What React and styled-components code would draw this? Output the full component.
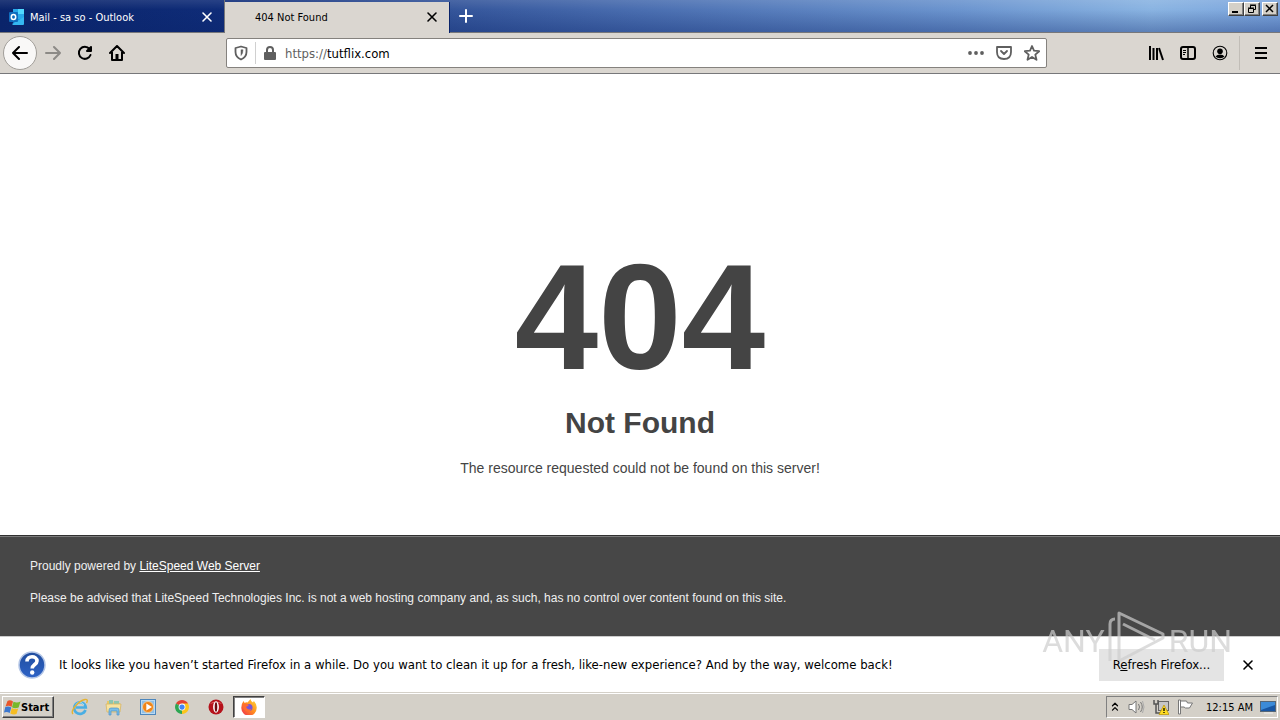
import styled, { createGlobalStyle } from 'styled-components';

const tahoma = `'DejaVu Sans Condensed', 'Noto Sans', sans-serif`;
const arial = `'Liberation Sans', Arial, sans-serif`;

const GlobalStyle = createGlobalStyle`
  * {
    box-sizing: border-box;
  }

  body {
    margin: 0;
    color: #000;
    font-family: ${tahoma};
    font-size: 11px;
  }

  button,
  input {
    font: inherit;
    color: inherit;
  }

  svg {
    display: block;
    flex: none;
  }
`;

const Desktop = styled.div`
  display: flex;
  flex-direction: column;
  min-height: 100vh;
  background: #fff;
`;

const TitleBar = styled.header`
  display: flex;
  align-items: stretch;
  height: 33px;
  border-bottom: 1px solid #77777a;
  background:
    linear-gradient(180deg, rgba(255, 255, 255, 0.1) 0%, rgba(10, 36, 106, 0) 30%, rgba(10, 36, 106, 0.35) 100%),
    linear-gradient(90deg, #0a246a 0%, #0f2c78 17%, #36579c 36%, #4a6eb0 50%, #6c95cf 75%, #8ab4e2 90%, #7ba4dc 100%);
`;

const Tab = styled.div`
  display: flex;
  align-items: center;
  width: 225px;
  height: ${({ $active }) => ($active ? '31px' : '32px')};
  margin-top: ${({ $active }) => ($active ? '2px' : '0')};
  padding: ${({ $active }) => ($active ? '0 9px 1px 30px' : '2px 9px 0 8px')};
  border-right: 1px solid ${({ $active }) => ($active ? '#0a246a' : '#77777a')};
  background: ${({ $active }) => ($active ? '#dad6d0' : 'transparent')};
  color: ${({ $active }) => ($active ? '#000' : '#fff')};
  gap: 5px;
`;

const TabTitle = styled.span`
  flex: 1;
  white-space: nowrap;
`;

const IconButton = styled.button`
  display: flex;
  align-items: center;
  justify-content: center;
  width: ${({ $size }) => $size || 16}px;
  height: ${({ $size }) => $size || 16}px;
  padding: 0;
  border: 0;
  background: none;
`;

const NewTabButton = styled(IconButton)`
  width: 32px;
  height: 32px;
  color: #fff;
`;

const WindowControls = styled.div`
  display: flex;
  margin-left: auto;
  padding: 2px 2px 0 0;
`;

const WindowButton = styled.button`
  display: flex;
  align-items: center;
  justify-content: center;
  width: 16px;
  height: 14px;
  margin-left: ${({ $apart }) => ($apart ? '2px' : '0')};
  padding: 0;
  border: 1px solid;
  border-color: #fff #404040 #404040 #fff;
  background: #d4d0c8;
  box-shadow: inset -1px -1px #808080;
`;

const Toolbar = styled.nav`
  display: flex;
  align-items: center;
  height: 41px;
  padding: 0 3px;
  border-bottom: 1px solid #77777a;
  background: #dad6d0;
`;

const ToolGroup = styled.div`
  display: flex;
  align-items: center;
  width: 223px;
`;

const BackButton = styled(IconButton)`
  width: 34px;
  height: 34px;
  border: 1px solid #a19e99;
  border-radius: 50%;
  background: #f9f8f7;
`;

const RightTools = styled(ToolGroup)`
  justify-content: flex-end;
  width: 230px;
`;

const MenuSlot = styled.div`
  display: flex;
  align-items: center;
  height: 34px;
  margin-left: 3px;
  padding-left: 5px;
  border-left: 1px solid #c1bdb7;
`;

const AddressBar = styled.form`
  display: flex;
  flex: 1;
  align-items: center;
  min-width: 0;
  height: 30px;
  padding: 0 6px;
  border: 1px solid #85827e;
  border-radius: 2px;
  background: #fff;
  color: #5f5f5f;
`;

const Identity = styled.div`
  display: flex;
  align-items: center;
  height: 22px;
  margin-left: 6px;
  padding-left: 6px;
  border-left: 1px solid #d0d0d0;
`;

const UrlField = styled.label`
  display: flex;
  flex: 1;
  align-items: center;
  margin-left: 7px;
  font-size: 13px;
`;

const UrlInput = styled.input`
  flex: 1;
  min-width: 0;
  padding: 0;
  border: 0;
  outline: 0;
  background: none;
  color: #000;
`;

const PageActions = styled.div`
  display: flex;
  gap: 12px;
`;

const Page = styled.main`
  display: flex;
  flex: 1;
  flex-direction: column;
  color: #444;
  font-family: ${arial};
`;

const ErrorMessage = styled.section`
  display: flex;
  flex: 1;
  flex-direction: column;
  align-items: center;
  justify-content: flex-end;
  padding-bottom: 58px;
  text-align: center;
`;

const ErrorCode = styled.h1`
  margin: 0;
  font-size: 150px;
  line-height: 150px;
`;

const ErrorTitle = styled.h2`
  margin: 14px 0 0;
  font-size: 30px;
  line-height: 34px;
`;

const ErrorText = styled.p`
  margin: 19px 0 0;
  font-size: 14px;
  line-height: 18px;
`;

const PageFooter = styled.footer`
  height: 101px;
  padding: 21px 30px 0;
  border-top: 1px solid #303030;
  background: #474747;
  box-shadow: inset 0 1px #7b7b7b;
  color: #f0f0f0;
  font-size: 12px;
  line-height: 18px;

  p {
    margin: 0 0 14px;
  }

  a {
    color: #fff;
  }
`;

const Notification = styled.aside`
  display: flex;
  align-items: center;
  height: 57px;
  padding: 0 24px 0 18px;
  border-top: 1px solid #ccc;
  border-bottom: 1px solid #d4d0c8;
  background: #fff;
  font-size: 13px;
`;

const NotificationText = styled.span`
  flex: 1;
  margin-left: 13px;
  white-space: nowrap;
`;

const RefreshButton = styled.button`
  width: 125px;
  height: 32px;
  margin-right: 16px;
  padding: 0;
  border: 0;
  background: #e4e4e4;
  white-space: nowrap;
`;

// lies over the page, the notification and its button
const Watermark = styled.div`
  position: fixed;
  right: 48px;
  bottom: 46px;
  display: flex;
  align-items: center;
  color: rgba(205, 205, 205, 0.7);
  font-family: Roboto, ${arial};
  font-size: 32px;
  line-height: 66px;
  pointer-events: none;
`;

const Taskbar = styled.footer`
  display: flex;
  align-items: center;
  height: 27px;
  padding: 0 2px;
  border-top: 1px solid #fff;
  background: #d4d0c8;
`;

const StartButton = styled.button`
  display: flex;
  align-items: center;
  width: 52px;
  height: 22px;
  margin-right: 9px;
  padding: 0 1px;
  border: 1px solid;
  border-color: #fff #404040 #404040 #fff;
  background: #d4d0c8;
  box-shadow: inset -1px -1px #808080;
  font-weight: bold;
`;

const TaskButton = styled.button`
  display: flex;
  align-items: center;
  justify-content: center;
  width: ${({ $active }) => ($active ? '32px' : '34px')};
  height: 22px;
  padding: 0;
  border: 1px solid transparent;
  border-color: ${({ $active }) => ($active ? '#404040 #fff #fff #404040' : 'transparent')};
  background: ${({ $active }) => ($active ? '#fff' : 'transparent')};
  box-shadow: ${({ $active }) => ($active ? 'inset 1px 1px #808080' : 'none')};
`;

const Tray = styled.div`
  display: flex;
  align-items: center;
  height: 22px;
  margin-left: auto;
  padding: 0 1px 0 3px;
  border: 1px solid;
  border-color: #808080 #fff #fff #808080;
  gap: 8px;
`;

const Clock = styled.time`
  margin: 0 -1px 0 5px;
  white-space: nowrap;
`;

const Stroke = ({ children, size = 16, width = 2, ...rest }) => (
  <svg
    width={size}
    height={size}
    viewBox="0 0 16 16"
    fill="none"
    stroke="currentColor"
    strokeWidth={width}
    strokeLinecap="round"
    strokeLinejoin="round"
    {...rest}
  >
    {children}
  </svg>
);

const CloseIcon = () => (
  <Stroke width={1.6}>
    <path d="M4 4l8 8M12 4l-8 8" />
  </Stroke>
);

const OutlookIcon = () => (
  <svg width="17" height="16" viewBox="0 0 17 16">
    <rect x="5" width="11" height="14" rx="1" fill="#1490df" />
    <path d="M5 0h5v5H5z" fill="#28a8ea" />
    <path d="M10 0h6v5h-6z" fill="#50d9ff" />
    <path d="M10 5h6v5h-6z" fill="#28a8ea" />
    <path d="M4 15l12-7v7a1 1 0 0 1-1 1H5z" fill="#35b8f1" />
    <rect x="1" y="3" width="9" height="10" rx="1" fill="#0f6cbd" />
    <ellipse cx="5.500" cy="8" rx="2.200" ry="2.500" fill="none" stroke="#fff" strokeWidth="1.500" />
  </svg>
);

const LibraryIcon = () => (
  <Stroke strokeLinecap="butt">
    <path d="M2 1v14M5.500 3v12M9 3v12" />
    <path d="M11 3l4 12" />
  </Stroke>
);

const SidebarIcon = () => (
  <Stroke>
    <rect x="1" y="2" width="14" height="12" rx="2" />
    <path d="M8 2v12" strokeWidth="1.500" />
    <path d="M3 5.500h3M3 7.500h3M3 9.500h2" strokeWidth="1" strokeLinecap="butt" />
  </Stroke>
);

const AccountIcon = () => (
  <svg width="16" height="16" viewBox="0 0 16 16">
    <circle cx="8" cy="8" r="6.800" fill="none" stroke="#000" strokeWidth="1.100" />
    <circle cx="8" cy="6.300" r="2.800" />
    <path d="M3.500 11.500Q5 9.500 8 9.500t4.500 2Q11 13.300 8 13.300t-4.500-1.800z" />
  </svg>
);

const HelpIcon = () => (
  <svg width="28" height="28" viewBox="0 0 28 28">
    <defs>
      <linearGradient id="help" x2="0" y2="1">
        <stop stopColor="#204d9e" />
        <stop offset="1" stopColor="#2e63c7" />
      </linearGradient>
    </defs>
    <circle cx="14" cy="14" r="13" fill="url(#help)" stroke="#b4c6e6" strokeWidth="1.500" />
    <path d="M9 10.500C9 4 19 4.500 19 10c0 3.500-4.800 3.500-4.800 7.500" fill="none" stroke="#fff" strokeWidth="3.600" />
    <circle cx="14.200" cy="21.500" r="2.200" fill="#fff" />
  </svg>
);

const WindowsLogo = () => (
  <svg width="17" height="16" viewBox="0 0 17 16">
    <path d="M3.500 2Q6 .5 9 2.500L7.500 8Q5 6 1.500 7.500z" fill="#e8562a" />
    <path d="M9.500 2.800Q13 4.500 16.500 2.500l-1.900 6Q11 10 8 8.300z" fill="#77b82a" />
    <path d="M1.300 8.100Q4.500 6.800 7.300 8.600L5.700 14Q3 12.500 0 13.500z" fill="#3c78cf" />
    <path d="M7.800 9q3 1.800 6.400.4L12.500 15q-3 1.200-6.200-.6z" fill="#f6bd23" />
  </svg>
);

const ExplorerIcon = () => (
  <svg width="18" height="18" viewBox="0 0 18 18" fill="none">
    <path d="M14.500 12a5.800 5.800 0 1 1 .3-2.500H5" stroke="#4aaee3" strokeWidth="2.600" />
    <path d="M4.500 7.500A4.600 4.600 0 0 1 13 7" stroke="#a5e2f8" />
    <path d="M2 16C-1 13 7 3 14 1.500c3-.6 2.500 2 1.500 3.500" stroke="#e5b332" strokeWidth="1.400" />
  </svg>
);

const FolderIcon = () => (
  <svg width="18" height="18" viewBox="0 0 18 18">
    <path d="M2 3h6l1 2h6v8H2z" fill="#e7c868" />
    <path d="M4 2h4v5H4zM9 3h5v4H9z" fill="#8cc6b0" />
    <path d="M1 6h15l-1 8H2z" fill="#f7e3a0" stroke="#d7b564" strokeWidth=".8" />
    <path d="M4 17v-5q0-2 2-2h6q2 0 2 2v5h-2v-4H6v4z" fill="#79bee8" stroke="#4e93c9" strokeWidth=".7" />
  </svg>
);

const PlayerIcon = () => (
  <svg width="16" height="16" viewBox="0 0 16 16">
    <rect x=".5" y=".5" width="15" height="15" fill="#b9daf4" stroke="#4c86bc" />
    <rect x="2" y="2" width="12" height="12" fill="#8fbfe7" />
    <circle cx="8" cy="8" r="5.500" fill="#ef8418" stroke="#f9d4a0" strokeWidth=".8" />
    <path d="M6.300 4.500v7L12 8z" fill="#fff" />
  </svg>
);

const ChromeIcon = () => (
  <svg width="14" height="14" viewBox="0 0 16 16">
    <path d="M8 8L1.100 4A8 8 0 0 1 14.900 4z" fill="#e34133" />
    <path d="M8 8l6.900-4A8 8 0 0 1 8 16z" fill="#fbc51b" />
    <path d="M8 8v8A8 8 0 0 1 1.100 4z" fill="#2da652" />
    <path d="M8 4h7l-3 6-4 6 2-6z" fill="#fbc51b" />
    <circle cx="8" cy="8" r="3.900" fill="#fff" />
    <circle cx="8" cy="8" r="3" fill="#4285f4" />
  </svg>
);

const OperaIcon = () => (
  <svg width="16" height="16" viewBox="0 0 16 16">
    <circle cx="8" cy="8" r="7.500" fill="#b5121b" />
    <path d="M2 5a7 5 0 0 1 12 0Q8 2 2 5z" fill="#e2666a" />
    <ellipse cx="8" cy="8" rx="2.900" ry="5.800" fill="#fff" />
    <ellipse cx="8" cy="8" rx="1.300" ry="4.700" fill="#6d0a10" />
  </svg>
);

const FirefoxIcon = () => (
  <svg width="16" height="16" viewBox="0 0 16 16">
    <defs>
      <linearGradient id="fox" x1="1" x2="0" y2="1">
        <stop stopColor="#ffde38" />
        <stop offset=".5" stopColor="#ff8a20" />
        <stop offset="1" stopColor="#ef2751" />
      </linearGradient>
    </defs>
    <path d="M2.500 2l1.200 2Q5 3 6.500 3.500 8 1.500 9.500 0q.2 2 2.500 3.500l.8-1.500Q16 5 15.700 9A7.700 7.700 0 0 1 .3 9Q.2 5 2.500 2z" fill="url(#fox)" />
    <circle cx="8" cy="8.500" r="3.500" fill="#7555d9" />
    <path d="M2.500 5Q5 4 8 6 6.500 7.500 5 8q2 4 5.500 1.500Q9 14 5 12 1 10 2.500 5z" fill="#ff6c30" />
  </svg>
);

const SpeakerIcon = () => (
  <svg width="17" height="16" viewBox="0 0 17 16" fill="none" stroke="#777">
    <path d="M1 5.500h3L8 2v12l-4-3.500H1z" fill="#fff" />
    <path d="M10.500 5q2 3 0 6M12.500 3q3.500 5 0 10" />
    <path d="M14.500 2q3 6 0 12" stroke="#aaa" />
  </svg>
);

const NetworkIcon = () => (
  <svg width="16" height="16" viewBox="0 0 16 16">
    <rect x="5.500" y="2.500" width="10" height="9" fill="#c6c6c6" stroke="#666" />
    <path d="M1 1v4h4V1M3 5v9h5" fill="none" stroke="#555" strokeWidth="1.500" />
    <path d="M11 6l5 9.500H6z" fill="#ffdc22" stroke="#b89100" strokeWidth=".7" />
    <path d="M11 9v3M11 13v1" stroke="#000" strokeWidth="1.300" />
  </svg>
);

const FlagIcon = () => (
  <svg width="16" height="16" viewBox="0 0 16 16" fill="#fff" stroke="#777">
    <path d="M1.500 1v14h2V1zM3.500 2h6l1 2h5l-3 5h-4L7 8H3.500z" />
  </svg>
);

const MonitorIcon = () => (
  <svg width="16" height="16" viewBox="0 0 16 16">
    <rect x=".5" y="2.500" width="15" height="10" fill="#1856a3" stroke="#567" />
    <path d="M1 3h14v3L1 11z" fill="#3c8bd8" />
    <path d="M4 14h9" stroke="#eee" />
  </svg>
);

const PlayMark = () => (
  <svg width="64" height="66" viewBox="0 0 64 66" fill="none" stroke="currentColor" strokeWidth="3" strokeLinejoin="round">
    <path d="M5 53V16q0-5 5-5" />
    <path d="M14 53V5l44 21v4L14 53" />
    <path d="M18 16l32 16" />
  </svg>
);

const tasks = [
  { name: 'Internet Explorer', Icon: ExplorerIcon },
  { name: 'Windows Explorer', Icon: FolderIcon },
  { name: 'Media Player', Icon: PlayerIcon },
  { name: 'Chrome', Icon: ChromeIcon },
  { name: 'Opera', Icon: OperaIcon },
  { name: 'Firefox', Icon: FirefoxIcon, active: true },
];

const App = () => (
  <>
    <GlobalStyle />
    <Desktop>
      <TitleBar>
        <Tab>
          <OutlookIcon />
          <TabTitle>Mail - sa so - Outlook</TabTitle>
          <IconButton aria-label="Close tab"><CloseIcon /></IconButton>
        </Tab>
        <Tab $active>
          <TabTitle>404 Not Found</TabTitle>
          <IconButton aria-label="Close tab"><CloseIcon /></IconButton>
        </Tab>
        <NewTabButton aria-label="New tab">
          <Stroke><path d="M8 2v12M2 8h12" /></Stroke>
        </NewTabButton>
        <WindowControls>
          <WindowButton aria-label="Minimize">
            <svg width="10" height="10"><path d="M1 7h6v2H1z" /></svg>
          </WindowButton>
          <WindowButton aria-label="Restore">
            <svg width="10" height="10" fill="none" stroke="#000">
              <path d="M3.500 4V1.500h5v4H7M3 1h6M1.500 4.500h5v4h-5zM1 4h6" />
            </svg>
          </WindowButton>
          <WindowButton $apart aria-label="Close">
            <svg width="10" height="10"><path d="M1 1l7 7M8 1L1 8" stroke="#000" strokeWidth="1.500" /></svg>
          </WindowButton>
        </WindowControls>
      </TitleBar>

      <Toolbar>
        <ToolGroup>
          <BackButton aria-label="Back">
            <Stroke><path d="M15 8H1M7 2L1 8l6 6" /></Stroke>
          </BackButton>
          <IconButton $size={32} aria-label="Forward">
            <Stroke color="#8c8a86"><path d="M1 8h14M9 2l6 6-6 6" /></Stroke>
          </IconButton>
          <IconButton $size={32} aria-label="Reload">
            <Stroke><path d="M13.500 10A6 6 0 1 1 12.500 4" /><path d="M14 2v4h-4z" fill="currentColor" /></Stroke>
          </IconButton>
          <IconButton $size={32} aria-label="Home">
            <Stroke><path d="M1 8l7-7 7 7M3 7v8h10V7" /><path d="M8 9v5" strokeWidth="3" strokeLinecap="butt" /></Stroke>
          </IconButton>
        </ToolGroup>
        <AddressBar onSubmit={(e) => e.preventDefault()}>
          <Stroke width={1.8}>
            <path d="M8 1.500L13.500 3v4q0 5-5.500 7.500Q2.500 12 2.500 7V3z" />
            <path d="M8 5v5.500Q10 9 10 5z" fill="currentColor" strokeWidth=".5" />
          </Stroke>
          <Identity>
            <svg width="16" height="16" viewBox="0 0 16 16" fill="currentColor">
              <path d="M4 7V5q0-4 4-4t4 4v2h1q1 0 1 1v6q0 1-1 1H3q-1 0-1-1V8q0-1 1-1zm2 0h4V5q0-2-2-2T6 5z" />
            </svg>
          </Identity>
          <UrlField>
            https://
            <UrlInput aria-label="Address" defaultValue="tutflix.com" />
          </UrlField>
          <PageActions>
            <IconButton type="button" aria-label="Page actions">
              <svg width="16" height="16" fill="#5f5f5f">
                <circle cx="2" cy="8" r="1.900" /><circle cx="8" cy="8" r="1.900" /><circle cx="14" cy="8" r="1.900" />
              </svg>
            </IconButton>
            <IconButton type="button" aria-label="Save to Pocket">
              <Stroke width={1.8}><path d="M1 2h14v5q0 7-7 7T1 7z" /><path d="M5 6l3 3 3-3" /></Stroke>
            </IconButton>
            <IconButton type="button" aria-label="Bookmark">
              <Stroke width={1.8}><path d="M8 1l2 4.700 5.200.5-3.900 3.400 1.200 5.200L8 12l-4.500 2.800 1.200-5.200L.8 6.200l5.200-.5z" /></Stroke>
            </IconButton>
          </PageActions>
        </AddressBar>
        <RightTools>
          <IconButton $size={32} aria-label="Library"><LibraryIcon /></IconButton>
          <IconButton $size={32} aria-label="Sidebars"><SidebarIcon /></IconButton>
          <IconButton $size={32} aria-label="Account"><AccountIcon /></IconButton>
          <MenuSlot>
            <IconButton $size={32} aria-label="Menu">
              <Stroke strokeLinecap="butt"><path d="M2 3h12M2 8h12M2 13h12" /></Stroke>
            </IconButton>
          </MenuSlot>
        </RightTools>
      </Toolbar>

      <Page>
        <ErrorMessage>
          <ErrorCode>404</ErrorCode>
          <ErrorTitle>Not Found</ErrorTitle>
          <ErrorText>The resource requested could not be found on this server!</ErrorText>
        </ErrorMessage>
        <PageFooter>
          <p>Proudly powered by <a href="#litespeed">LiteSpeed Web Server</a></p>
          <p>Please be advised that LiteSpeed Technologies Inc. is not a web hosting company and, as such, has no control over content found on this site.</p>
        </PageFooter>
      </Page>

      <Notification>
        <HelpIcon />
        <NotificationText>
          It looks like you haven’t started Firefox in a while. Do you want to clean it up for a fresh, like-new experience? And by the way, welcome back!
        </NotificationText>
        <RefreshButton>R<u>e</u>fresh Firefox...</RefreshButton>
        <IconButton aria-label="Dismiss"><CloseIcon /></IconButton>
      </Notification>

      <Taskbar>
        <StartButton><WindowsLogo />Start</StartButton>
        {tasks.map(({ name, Icon, active }) => (
          <TaskButton key={name} $active={active} aria-label={name}><Icon /></TaskButton>
        ))}
        <Tray>
          <Stroke size={10}><path d="M4 6l4-4 4 4M4 13l4-4 4 4" /></Stroke>
          <SpeakerIcon />
          <NetworkIcon />
          <FlagIcon />
          <Clock>12:15 AM</Clock>
          <MonitorIcon />
        </Tray>
      </Taskbar>
    </Desktop>
    <Watermark>
      <span>ANY</span>
      <PlayMark />
      <span>RUN</span>
    </Watermark>
  </>
);

export default App;
